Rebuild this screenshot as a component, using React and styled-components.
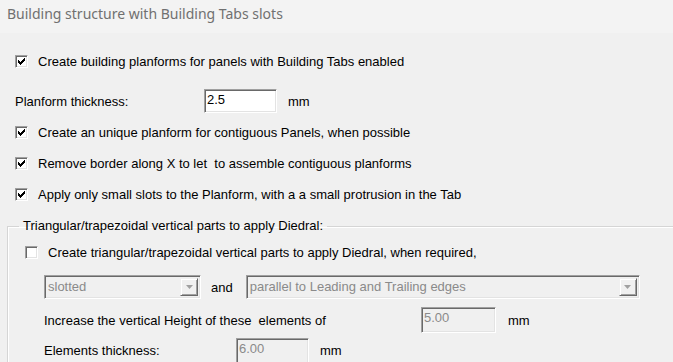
import React from "react";
import styled, { createGlobalStyle } from "styled-components";

const GlobalStyle = createGlobalStyle`
  html, body {
    margin: 0;
    padding: 0;
    background: #f0f0f0;
  }
`;

const Page = styled.div`
  width: 673px;
  height: 362px;
  overflow: hidden;
  background: #f0f0f0;
  font-family: "Liberation Sans", Arial, sans-serif;
  font-size: 13px;
  color: #000;
`;

const TitleBar = styled.div`
  height: 33px;
  box-sizing: border-box;
  padding: 5px 0 0 7px;
  background: #f3f3f3;
  color: #707070;
  font-family: "Noto Sans", "Open Sans", sans-serif;
  font-size: 14px;
  line-height: 18px;
`;

const Body = styled.div`
  display: flex;
  flex-direction: column;
  padding: 16px 0 0 15px;
`;

const Row = styled.div`
  display: flex;
  align-items: center;
  height: ${(p) => p.h || 24}px;
  margin-top: ${(p) => p.mt || 0}px;
  margin-left: ${(p) => p.ml || 0}px;
  white-space: pre;
`;

const Box = styled.span`
  width: 13px;
  height: 13px;
  box-sizing: border-box;
  flex: none;
  display: flex;
  align-items: center;
  justify-content: center;
  background: #fff;
  border: 1px solid;
  border-color: #a0a0a0 #ffffff #ffffff #a0a0a0;
  box-shadow: inset 1px 1px 0 #696969, inset -1px -1px 0 #e3e3e3;
  margin-right: 10px;
`;

const Label = styled.span`
  width: ${(p) => (p.w ? `${p.w}px` : "auto")};
  flex: none;
`;

const Field = styled.div`
  box-sizing: border-box;
  width: ${(p) => p.w}px;
  height: ${(p) => p.h || 24}px;
  padding: 2px 0 0 2px;
  background: ${(p) => (p.disabled ? "#f0f0f0" : "#fff")};
  color: ${(p) => (p.disabled ? "#8a8a8a" : "#000")};
  border: 1px solid;
  border-color: #a0a0a0 #ffffff #ffffff #a0a0a0;
  box-shadow: inset 1px 1px 0 #696969, inset -1px -1px 0 #e3e3e3;
  line-height: 16px;
  align-self: flex-start;
`;

const Unit = styled.span`
  margin-left: ${(p) => p.ml || 11}px;
`;

const Select = styled.div`
  box-sizing: border-box;
  display: flex;
  align-items: stretch;
  width: ${(p) => p.w}px;
  height: 24px;
  margin-left: ${(p) => p.ml || 0}px;
  padding: 2px;
  background: #f0f0f0;
  color: #8a8a8a;
  border: 1px solid;
  border-color: #a0a0a0 #ffffff #ffffff #a0a0a0;
  box-shadow: inset 1px 1px 0 #696969, inset -1px -1px 0 #e3e3e3;
`;

const SelectText = styled.span`
  flex: 1;
  padding-left: 1px;
  line-height: 18px;
`;

const ArrowButton = styled.span`
  width: 18px;
  box-sizing: border-box;
  display: flex;
  align-items: center;
  justify-content: center;
  background: #f0f0f0;
  border: 1px solid;
  border-color: #f0f0f0 #696969 #696969 #f0f0f0;
  box-shadow: inset 1px 1px 0 #fff, inset -1px -1px 0 #a0a0a0;
`;

const Group = styled.fieldset`
  margin: 12px 0 0 -8px;
  padding: 0;
  width: 700px;
  min-width: 0;
  border: none;
  border-top: 1px solid #d5d5d5;
  border-left: 1px solid #d5d5d5;
  box-shadow: inset 1px 1px 0 #ffffff;
`;

const Legend = styled.legend`
  margin-left: 11px;
  padding: 0 4px;
  line-height: 16px;
`;

const Check = ({ checked }) => (
  <Box>
    {checked && (
      <svg width="7" height="7" viewBox="0 0 7 7" shapeRendering="crispEdges">
        <path
          d="M6 0h1v1h-1zM5 1h2v1h-2zM0 2h1v1h-1zM4 2h3v1h-3zM0 3h2v1h-2zM3 3h3v1h-3zM0 4h5v1h-5zM1 5h3v1h-3zM2 6h1v1h-1z"
          fill="#000"
        />
      </svg>
    )}
  </Box>
);

const Arrow = () => (
  <ArrowButton>
    <svg width="7" height="4" viewBox="0 0 7 4">
      <path d="M0 0 H7 L3.5 4 Z" fill="#a0a0a0" />
    </svg>
  </ArrowButton>
);

export default function App() {
  return (
    <Page>
      <GlobalStyle />
      <TitleBar>Building structure with Building Tabs slots</TitleBar>
      <Body>
        <Row>
          <Check checked />
          <Label>Create building planforms for panels with Building Tabs enabled</Label>
        </Row>
        <Row mt={16}>
          <Label w={189}>Planform thickness:</Label>
          <Field w={73}>2.5</Field>
          <Unit>mm</Unit>
        </Row>
        <Row mt={7}>
          <Check checked />
          <Label>Create an unique planform for contiguous Panels, when possible</Label>
        </Row>
        <Row mt={7}>
          <Check checked />
          <Label>Remove border along X to let  to assemble contiguous planforms</Label>
        </Row>
        <Row mt={7}>
          <Check checked />
          <Label>Apply only small slots to the Planform, with a a small protrusion in the Tab</Label>
        </Row>
        <Group>
          <Legend>Triangular/trapezoidal vertical parts to apply Diedral:</Legend>
          <Row ml={17} mt={6}>
            <Check />
            <Label>Create triangular/trapezoidal vertical parts to apply Diedral, when required,</Label>
          </Row>
          <Row ml={36} mt={11}>
            <Select w={157}>
              <SelectText>slotted</SelectText>
              <Arrow />
            </Select>
            <Unit ml={10}>and</Unit>
            <Select w={394} ml={13}>
              <SelectText>parallel to Leading and Trailing edges</SelectText>
              <Arrow />
            </Select>
          </Row>
          <Row ml={36} mt={8} h={26}>
            <Label w={377}>Increase the vertical Height of these  elements of</Label>
            <Field w={75} h={26} disabled>5.00</Field>
            <Unit ml={12}>mm</Unit>
          </Row>
          <Row ml={36} mt={5}>
            <Label w={192}>Elements thickness:</Label>
            <Field w={73} h={26} disabled>6.00</Field>
            <Unit ml={11}>mm</Unit>
          </Row>
        </Group>
      </Body>
    </Page>
  );
}
